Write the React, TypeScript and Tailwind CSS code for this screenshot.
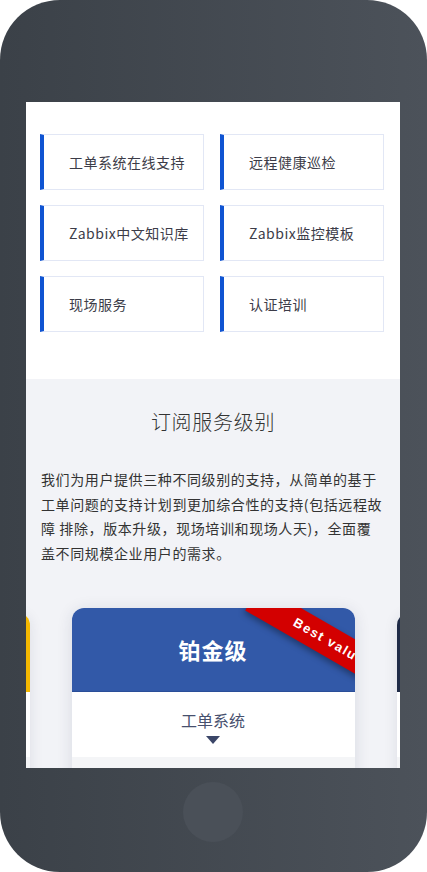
import React from 'react';

const FONT = '"Noto Sans CJK SC", "Noto Sans", sans-serif';

const services = [
    '工单系统在线支持',
    '远程健康巡检',
    'Zabbix中文知识库',
    'Zabbix监控模板',
    '现场服务',
    '认证培训',
];

const ServiceTile = ({ label }: { label: string }) => (
    <div className="h-[56px] flex items-center bg-white border border-[#e2e7f5] border-l-4 border-l-[#0f54d2] pl-[25px] text-[14px] tracking-[0.5px] text-[#3c3c48]">
        {label}
    </div>
);

const SideCard = ({ color }: { color: string }) => (
    <div className="shrink-0 w-[255px] h-[300px] mt-[5px] rounded-t-[12px] bg-white shadow-[0_2px_14px_rgba(30,40,70,0.10)] overflow-hidden">
        <div className={`h-[79px] ${color}`} />
        <div className="h-[65px] bg-white" />
        <div className="h-full bg-[#f4f5f7]" />
    </div>
);

const PlanCard = () => (
    <div className="shrink-0 w-[283px] h-[300px] rounded-t-[12px] bg-white shadow-[0_2px_16px_rgba(30,40,70,0.12)] overflow-hidden relative">
        <div className="h-[84px] bg-[#3259a8] border-b border-[#2a4e98] flex items-center justify-center">
            <span className="text-white text-[22px] font-bold tracking-[1px]">铂金级</span>
        </div>

        {/* Best value ribbon */}
        <div className="absolute left-[168px] top-[22px] w-[190px] h-[30px] bg-[#d30000] rotate-[30deg] shadow-[0_3px_6px_rgba(0,0,0,0.35)] flex items-center justify-center pr-[14px]">
            <span className="text-white text-[13px] font-bold tracking-[1.5px] font-['Liberation_Sans',sans-serif]">Best value</span>
        </div>

        <div className="h-[65px] flex flex-col items-center pt-[16px]">
            <span className="text-[16px] leading-[24px] text-[#47506e]">工单系统</span>
            <svg width="16" height="9" viewBox="0 0 16 9" className="mt-[4px]">
                <path d="M1 0 L15 0 L8 8 Z" fill="#3b4668" />
            </svg>
        </div>
        <div className="h-full bg-[#f4f5f7]" />
    </div>
);

export default function App() {
    return (
        <div className="w-[427px] h-[872px] bg-white" style={{ fontFamily: FONT }}>
            <div className="w-[427px] h-[872px] rounded-[60px] bg-linear-to-r from-[#3b4148] to-[#4c525a] pt-[102px] pl-[26px] pr-[27px] flex flex-col">

                <div className="h-[666px] overflow-hidden bg-white">

                    {/* 服务项目 */}
                    <section className="bg-white pl-[14px] pr-[16px] pt-[32px] pb-[47px]">
                        <div className="grid grid-cols-2 gap-x-[16px] gap-y-[15px]">
                            {services.map(s => <ServiceTile key={s} label={s} />)}
                        </div>
                    </section>

                    {/* 订阅服务级别 */}
                    <section className="bg-[#f2f3f7] pt-[29px] h-[400px]">
                        <h2 className="text-center text-[20px] leading-[28px] tracking-[0.7px] font-light text-[#333]">订阅服务级别</h2>

                        <p className="mt-[31px] px-[15px] text-[14px] leading-[24.5px] tracking-[0.6px] text-[#333] whitespace-nowrap">
                            我们为用户提供三种不同级别的支持，从简单的基于<br />
                            工单问题的支持计划到更加综合性的支持(包括远程故<br />
                            障 排除，版本升级，现场培训和现场人天)，全面覆<br />
                            盖不同规模企业用户的需求。
                        </p>

                        <div className="mt-[43px] flex justify-center items-start gap-[42px]">
                            <SideCard color="bg-[#f5b800]" />
                            <PlanCard />
                            <SideCard color="bg-[#1f2b47]" />
                        </div>
                    </section>
                </div>

                <div className="mt-[14px] mx-auto w-[60px] h-[60px] rounded-full bg-[#4a5058]" />
            </div>
        </div>
    );
}
